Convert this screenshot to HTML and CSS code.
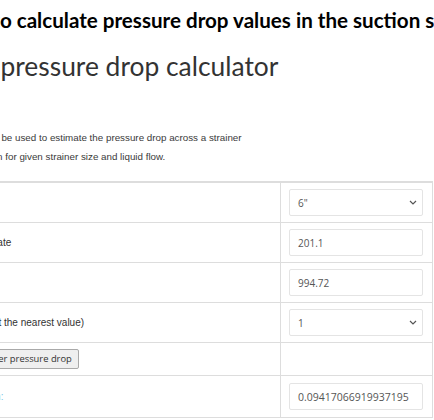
FILE: index.html
```html
<!DOCTYPE html>
<html>
<head>
<meta charset="utf-8">
<link rel="stylesheet" href="styles.css">
</head>
<body>
<div class="page">
  <h1 class="question">How to calculate pressure drop values in the suction strainer</h1>
  <h2 class="calc-title">Strainer pressure drop calculator</h2>
  <p class="intro">This calculator can be used to estimate the pressure drop across a strainer of the pump suction for given strainer size and liquid flow.</p>
  <table class="calc">
    <colgroup><col class="c-label"><col class="c-field"></colgroup>
    <tr>
      <td class="label">Strainer size</td>
      <td><div class="select"><span>6"</span><svg class="chev" width="8" height="5" viewBox="0 0 8 5"><path d="M1 1 L4 4 L7 1" fill="none" stroke="#555" stroke-width="1.2"/></svg></div></td>
    </tr>
    <tr>
      <td class="label">Volumetric flow rate</td>
      <td><div class="input">201.1</div></td>
    </tr>
    <tr>
      <td class="label">Density (kg/m3)</td>
      <td><div class="input">994.72</div></td>
    </tr>
    <tr>
      <td class="label">Mesh size (select the nearest value)</td>
      <td><div class="select"><span>1</span><svg class="chev" width="8" height="5" viewBox="0 0 8 5"><path d="M1 1 L4 4 L7 1" fill="none" stroke="#555" stroke-width="1.2"/></svg></div></td>
    </tr>
    <tr class="btn-row">
      <td class="label"><button class="btn">Calculate strainer pressure drop</button></td>
      <td></td>
    </tr>
    <tr class="result-row">
      <td class="label result-label">Pressure drop, m:</td>
      <td><div class="input result">0.09417066919937195</div></td>
    </tr>
  </table>
</div>
</body>
</html>
```

FILE: styles.css
```css
html, body {
  margin: 0;
  padding: 0;
  background: #ffffff;
  overflow: hidden;
}

.page {
  width: 434px;
  height: 420px;
  overflow: hidden;
}

.question {
  margin: 7px 0 0 -56px;
  white-space: nowrap;
  font-family: Lato, "Open Sans", sans-serif;
  font-weight: 700;
  font-size: 20.6px;
  line-height: 26px;
  color: #000000;
}

.calc-title {
  margin: 17px 0 0 -96px;
  white-space: nowrap;
  font-family: Lato, "Open Sans", sans-serif;
  font-weight: 400;
  font-size: 26.4px;
  line-height: 32px;
  color: #333333;
}

.intro {
  width: 330px;
  margin: 46px 0 0 -83px;
  font-family: "Liberation Sans", Arial, sans-serif;
  font-size: 9.8px;
  line-height: 19px;
  color: #3a3a3a;
}

.calc {
  margin: 15px 0 0 -85px;
  width: 517px;
  border-collapse: collapse;
  table-layout: fixed;
  border: 1px solid #dddddd;
  border-top: 2px solid #dddddd;
}

.c-label { width: 365px; }
.c-field { width: 152px; }

.calc td {
  border: 1px solid #dddddd;
  padding: 6px 9px 6px 8px;
  height: 27px;
  vertical-align: middle;
}

.label {
  font-family: "Liberation Sans", Arial, sans-serif;
  font-size: 10px;
  color: #333333;
  white-space: nowrap;
}

.input, .select {
  box-sizing: border-box;
  height: 27px;
  border: 1px solid #e4e4e4;
  border-radius: 2px;
  background: #ffffff;
  padding: 0 8px;
  display: flex;
  align-items: center;
  justify-content: space-between;
  font-family: "Open Sans", sans-serif;
  font-size: 10px;
  color: #555555;
}

.select {
  padding-right: 5px;
}

.chev { display: block; }

.btn-row td {
  height: 20px;
}

.btn {
  box-sizing: border-box;
  height: 20px;
  margin: 0;
  padding: 0 6px;
  border: 1px solid #a9a9a9;
  border-radius: 2px;
  background: #efefef;
  font-family: "Open Sans", sans-serif;
  font-size: 9.4px;
  color: #333333;
  line-height: 18px;
}

.result-row td {
  padding-top: 7px;
  padding-bottom: 7px;
}

.result-label {
  color: #7cc6e8;
}

.result {
  font-size: 10.5px;
}
```
